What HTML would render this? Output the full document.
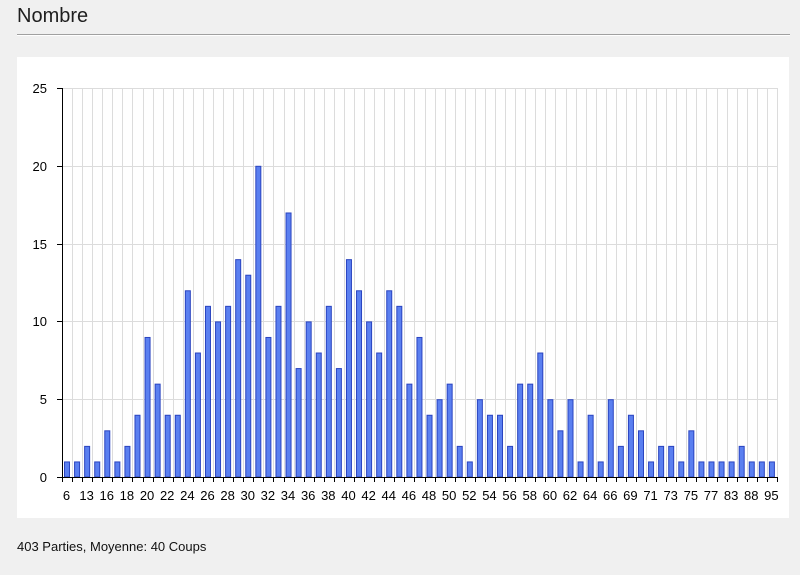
<!DOCTYPE html>
<html><head><meta charset="utf-8"><style>
body{margin:0;width:800px;height:575px;background:#f0f0f0;font-family:"Liberation Sans",sans-serif;overflow:hidden;position:relative}
.t{position:absolute;left:17px;top:5px;font-size:20px;color:#1e1e1e}
.hr{position:absolute;left:17px;top:34px;width:773px;height:1px;background:#a0a0a0;border-bottom:1px solid #fff}
.panel{position:absolute;left:17px;top:57px;width:772px;height:461px;background:#fff}
.f{position:absolute;left:17px;top:539px;font-size:13px;color:#111}
</style></head><body>
<div class="t">Nombre</div><div class="hr"></div>
<div class="panel"></div>
<svg id="s" width="800" height="575" style="position:absolute;left:0;top:0" font-family="Liberation Sans, sans-serif" font-size="13" fill="#000">
<g id="g"></g>
<g text-anchor="end">
<text x="47" y="93">25</text><text x="47" y="171">20</text><text x="47" y="249">15</text><text x="47" y="326">10</text><text x="47" y="404">5</text><text x="47" y="482">0</text>
</g>
<g id="lbl" text-anchor="middle"></g>
</svg>
<div class="f">403 Parties, Moyenne: 40 Coups</div>
<script>
var v=[1,1,2,1,3,1,2,4,9,6,4,4,12,8,11,10,11,14,13,20,9,11,17,7,10,8,11,7,14,12,10,8,12,11,6,9,4,5,6,2,1,5,4,4,2,6,6,8,5,3,5,1,4,1,5,2,4,3,1,2,2,1,3,1,1,1,1,2,1,1,1];
var L=[6,13,16,18,20,22,24,26,28,30,32,34,36,38,40,42,44,46,48,50,52,54,56,58,60,62,64,66,69,71,73,75,77,83,88,95];
var ns="http://www.w3.org/2000/svg",g=document.getElementById('g'),lb=document.getElementById('lbl');
function el(n,a,p){var e=document.createElementNS(ns,n);for(var k in a)e.setAttribute(k,a[k]);(p||g).appendChild(e);return e}
var x0=62,y0=477,u=15.56,d=10.07;
for(var i=0;i<71;i++){var x=Math.round(x0+d*(i+1))+0.5;el('line',{x1:x,x2:x,y1:88,y2:477,stroke:'#dcdcdc'});}
for(var j=1;j<=5;j++){var y=Math.round(y0-5*j*u)+0.5;el('line',{x1:62,x2:777,y1:y,y2:y,stroke:'#dcdcdc'});el('line',{x1:57,x2:62,y1:y,y2:y,stroke:'#000'});}
for(var i=0;i<71;i++){var cx=x0+4.5+d*i,h=v[i]*u;el('rect',{x:cx-2.5+.5,y:y0-h+.5,width:5,height:h-.5,fill:'#5a7ff0',stroke:'#2a44c0','stroke-width':1});}
el('line',{x1:62.5,x2:62.5,y1:88,y2:482,stroke:'#000'});
el('line',{x1:57,x2:778,y1:477.5,y2:477.5,stroke:'#000'});
for(var i=0;i<71;i++){var x=Math.round(x0+d*(i+1))+0.5;el('line',{x1:x,x2:x,y1:477,y2:482,stroke:'#000'});}
for(var k=0;k<L.length;k++){var t=el('text',{x:x0+4.5+d*2*k,y:500},lb);t.textContent=L[k];}
</script>
</body></html>
